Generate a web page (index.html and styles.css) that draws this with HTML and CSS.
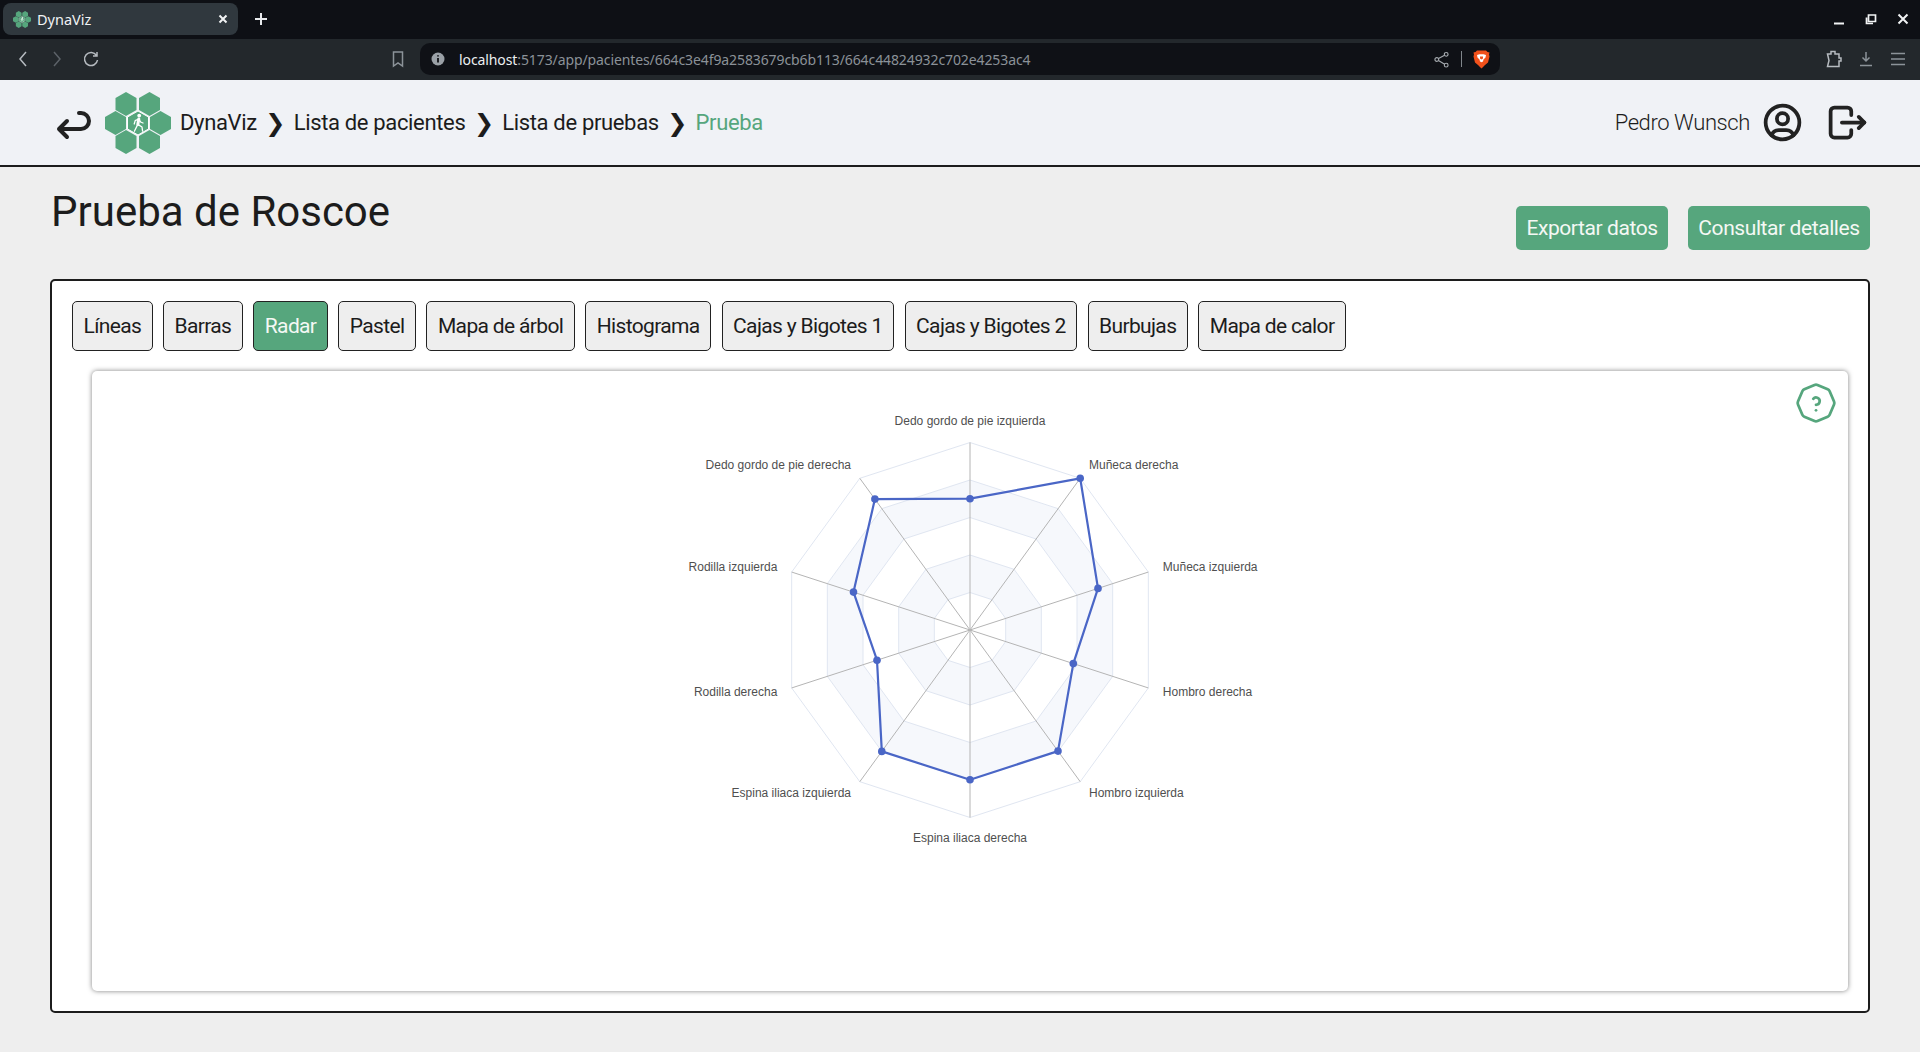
FILE: index.html

```html
<!DOCTYPE html>
<html lang="es">
<head>
  <meta charset="UTF-8">
  <title>DynaViz</title>
  <link rel="stylesheet" href="styles.css">
</head>
<body>
  <svg class="defs" width="0" height="0">
    <defs>
      <polygon id="hex" points="0,-12 10.5,-6 10.5,6 0,12 -10.5,6 -10.5,-6"/>
      <symbol id="logo" viewBox="0 0 66 62">
        <g fill="#56a67d">
          <use href="#hex" x="21" y="12"/>
          <use href="#hex" x="44.5" y="12"/>
          <use href="#hex" x="10.5" y="31"/>
          <use href="#hex" x="55.5" y="31"/>
          <use href="#hex" x="21" y="50"/>
          <use href="#hex" x="44.5" y="50"/>
          <use href="#hex" x="33" y="31" stroke="#fff" stroke-width="1"/>
        </g>
        <g fill="none" stroke="#fff" stroke-linecap="round" stroke-linejoin="round">
          <circle cx="34.2" cy="23.6" r="1.9" fill="#fff" stroke="none"/>
          <path d="M33.8 27l-1 5.4" stroke-width="3"/>
          <path d="M32.8 32.4l-3.4 6.8M32.8 32.4l4.2 2.6l.6 4.2M33.6 27l-3.4 1.6l-1 3.4M34 27l1.6 3l2.4 1" stroke-width="1.3"/>
        </g>
      </symbol>
    </defs>
  </svg>

  <div class="tabstrip">
    <div class="tab">
      <svg class="favicon" width="18" height="17"><use href="#logo"/></svg>
      <span class="tab-title">DynaViz</span>
      <svg class="tab-close" width="10" height="10" viewBox="0 0 10 10"><path d="M1.5 1.5l7 7M8.5 1.5l-7 7"/></svg>
    </div>
    <svg class="tab-new" width="14" height="14" viewBox="0 0 14 14"><path d="M7 1v12M1 7h12"/></svg>
    <div class="win-controls">
      <svg width="12" height="12" viewBox="0 0 12 12"><path d="M1 10.5h10" stroke-width="2"/></svg>
      <svg width="12" height="12" viewBox="0 0 12 12"><path d="M3.500 2h7v6.500h-7zM1.500 4.500v6h6.500" stroke-width="1.700"/></svg>
      <svg width="12" height="12" viewBox="0 0 12 12"><path d="M1.500 1.500l9 9M10.500 1.500l-9 9" stroke-width="2"/></svg>
    </div>
  </div>

  <div class="toolbar">
    <div class="tool-btn"><svg width="20" height="20" viewBox="0 0 20 20"><path d="M13 3l-6 7l6 7"/></svg></div>
    <div class="tool-btn dim"><svg width="20" height="20" viewBox="0 0 20 20"><path d="M7 3l6 7l-6 7"/></svg></div>
    <div class="tool-btn"><svg width="20" height="20" viewBox="0 0 20 20"><path d="M15.500 6.500a6.500 6.500 0 1 0 1 4.500M16 3v4h-4"/></svg></div>
    <div class="tool-btn bookmark"><svg width="20" height="20" viewBox="0 0 20 20"><path d="M5.500 3h9v14l-4.500 -3l-4.500 3z"/></svg></div>
    <div class="urlbar">
      <svg class="url-info" width="14" height="14" viewBox="0 0 14 14"><circle cx="7" cy="7" r="6.500"/><path d="M7 6v4.500M7 3.200v1.400"/></svg>
      <div class="url-text"><span class="url-host">localhost</span>:5173/app/pacientes/664c3e4f9a2583679cb6b113/664c44824932c702e4253ac4</div>
      <svg class="url-share" width="15" height="17" viewBox="0 0 16 18"><circle cx="13" cy="3.500" r="2"/><circle cx="3" cy="9" r="2"/><circle cx="13" cy="15" r="2"/><path d="M4.800 8l6.500 -3.600M4.800 10l6.500 4"/></svg>
      <span class="url-divider"></span>
      <svg class="url-brave" width="17" height="19" viewBox="0 0 17 19">
        <path d="M4 0.500h9l1.500 1.500l2 0.500l-0.500 2l0.500 2l-1.500 6l-3 2.500l-3.500 3.500l-3.500 -3.500l-3 -2.500l-1.500 -6l0.500 -2l-0.500 -2l2 -0.500z" fill="#f1511b"/>
        <path d="M4 5l2.500 -0.800h4l2.500 0.800l-0.500 2.500l-2 2l-0.500 2l-1.500 0.800l-1.500 -0.800l-0.500 -2l-2 -2z" fill="#fff"/>
        <path d="M7 6.500v2l1.500 1l1.500 -1v-2" fill="#f1511b"/>
      </svg>
    </div>
    <div class="tool-right">
      <div class="tool-btn"><svg width="20" height="20" viewBox="0 0 20 20"><path d="M3.500 5h3.500v-2.500h4v2.500h4v4h2v3h-2v5.500h-11.500l1.500 -6z" stroke-width="1.800"/></svg></div>
      <div class="tool-btn dim-more"><svg width="20" height="20" viewBox="0 0 20 20"><path d="M10 3v9M6.500 8.500l3.500 3.500l3.500 -3.500M4 16.500h12"/></svg></div>
      <div class="tool-btn dim-more"><svg width="20" height="20" viewBox="0 0 20 20"><path d="M3 4.500h14M3 10h14M3 15.500h14"/></svg></div>
    </div>
  </div>

  <header class="topbar">
    <svg class="icon back-icon" width="48" height="48" viewBox="0 0 24 24"><path d="M9 11l-4 4l4 4m-4 -4h11a4 4 0 0 0 0 -8h-1"/></svg>
    <svg class="logo" width="66" height="62"><use href="#logo"/></svg>
    <nav class="crumbs">
      <span>DynaViz</span>
      <span class="crumb-sep">❯</span>
      <span>Lista de pacientes</span>
      <span class="crumb-sep">❯</span>
      <span>Lista de pruebas</span>
      <span class="crumb-sep">❯</span>
      <span class="crumb-current">Prueba</span>
    </nav>
    <div class="user">
      <span class="user-name">Pedro Wunsch</span>
      <svg class="icon" width="45" height="45" viewBox="0 0 24 24">
        <path d="M12 12m-9 0a9 9 0 1 0 18 0a9 9 0 1 0 -18 0"/>
        <path d="M12 10m-3 0a3 3 0 1 0 6 0a3 3 0 1 0 -6 0"/>
        <path d="M6.168 18.849a4 4 0 0 1 3.832 -2.849h4a4 4 0 0 1 3.834 2.855"/>
      </svg>
      <svg class="icon logout-icon" width="45" height="45" viewBox="0 0 24 24">
        <path d="M14 8v-2a2 2 0 0 0 -2 -2h-7a2 2 0 0 0 -2 2v12a2 2 0 0 0 2 2h7a2 2 0 0 0 2 -2v-2"/>
        <path d="M9 12h12l-3 -3"/>
        <path d="M18 15l3 -3"/>
      </svg>
    </div>
  </header>

  <main class="content">
    <div class="title-row">
      <h1>Prueba de Roscoe</h1>
      <div class="actions">
        <button class="btn-green btn-export">Exportar datos</button>
        <button class="btn-green btn-details">Consultar detalles</button>
      </div>
    </div>

    <section class="panel">
      <div class="chart-tabs">
        <button class="chart-tab">Líneas</button>
        <button class="chart-tab">Barras</button>
        <button class="chart-tab active">Radar</button>
        <button class="chart-tab">Pastel</button>
        <button class="chart-tab">Mapa de árbol</button>
        <button class="chart-tab">Histograma</button>
        <button class="chart-tab">Cajas y Bigotes 1</button>
        <button class="chart-tab">Cajas y Bigotes 2</button>
        <button class="chart-tab">Burbujas</button>
        <button class="chart-tab">Mapa de calor</button>
      </div>

      <div class="chart-card">
        <svg class="help-icon" width="44" height="44" viewBox="0 0 24 24">
          <path d="M12.802 2.165l5.575 2.389c.48 .206 .863 .589 1.07 1.07l2.388 5.574c.22 .512 .22 1.092 0 1.604l-2.389 5.575c-.206 .48 -.589 .863 -1.07 1.07l-5.574 2.388c-.512 .22 -1.092 .22 -1.604 0l-5.575 -2.389a2.036 2.036 0 0 1 -1.07 -1.07l-2.388 -5.574a2.036 2.036 0 0 1 0 -1.604l2.389 -5.575c.206 -.48 .589 -.863 1.07 -1.07l5.574 -2.388a2.036 2.036 0 0 1 1.604 0z"/>
          <path d="M12 16v.01"/>
          <path d="M12 13a2 2 0 0 0 .914 -3.782a1.98 1.98 0 0 0 -2.414 .483"/>
        </svg>
        <svg class="radar" width="600" height="500" viewBox="-300 -250 600 500">
          <polygon class="ring" points="0,-187.500 110.210,-151.690 178.330,-57.940 178.330,57.940 110.210,151.690 0,187.500 -110.210,151.690 -178.330,57.940 -178.330,-57.940 -110.210,-151.690"/>
          <polygon class="ring shade" points="0,-150 88.170,-121.350 142.660,-46.350 142.660,46.350 88.170,121.350 0,150 -88.170,121.350 -142.660,46.350 -142.660,-46.350 -88.170,-121.350"/>
          <polygon class="ring" points="0,-112.500 66.130,-91.010 107,-34.760 107,34.760 66.130,91.010 0,112.500 -66.130,91.010 -107,34.760 -107,-34.760 -66.130,-91.010"/>
          <polygon class="ring shade" points="0,-75 44.090,-60.680 71.330,-23.180 71.330,23.180 44.090,60.680 0,75 -44.090,60.680 -71.330,23.180 -71.330,-23.180 -44.090,-60.680"/>
          <polygon class="ring" points="0,-37.500 22.040,-30.340 35.670,-11.590 35.670,11.590 22.040,30.340 0,37.500 -22.040,30.340 -35.670,11.590 -35.670,-11.590 -22.040,-30.340"/>
          <path class="spokes" d="M0 -187.500V187.500M110.210 -151.690L-110.210 151.690M178.330 -57.940L-178.330 57.940M178.330 57.940L-178.330 -57.940M110.210 151.690L-110.210 -151.690"/>
          <polygon class="series" points="0,-131.300 110.200,-151.700 128,-41.600 103.300,33.600 88,121.100 0,149.700 -88.200,121.400 -93,30.200 -116.500,-37.900 -95.100,-130.900"/>
          <g class="dots">
            <circle cx="0" cy="-131.300" r="3.800"/>
            <circle cx="110.200" cy="-151.700" r="3.800"/>
            <circle cx="128" cy="-41.600" r="3.800"/>
            <circle cx="103.300" cy="33.600" r="3.800"/>
            <circle cx="88" cy="121.100" r="3.800"/>
            <circle cx="0" cy="149.700" r="3.800"/>
            <circle cx="-88.200" cy="121.400" r="3.800"/>
            <circle cx="-93" cy="30.200" r="3.800"/>
            <circle cx="-116.500" cy="-37.900" r="3.800"/>
            <circle cx="-95.100" cy="-130.900" r="3.800"/>
          </g>
          <g class="labels">
            <text x="0" y="-205" text-anchor="middle">Dedo gordo de pie izquierda</text>
            <text x="119" y="-161">Muñeca derecha</text>
            <text x="192.800" y="-59">Muñeca izquierda</text>
            <text x="192.800" y="66">Hombro derecha</text>
            <text x="119" y="167">Hombro izquierda</text>
            <text x="0" y="212" text-anchor="middle">Espina iliaca derecha</text>
            <text x="-119" y="167" text-anchor="end">Espina iliaca izquierda</text>
            <text x="-192.700" y="66" text-anchor="end">Rodilla derecha</text>
            <text x="-192.700" y="-59" text-anchor="end">Rodilla izquierda</text>
            <text x="-119" y="-161" text-anchor="end">Dedo gordo de pie derecha</text>
          </g>
        </svg>
      </div>
    </section>
  </main>
</body>
</html>
```

FILE: styles.css

```css
* {
  box-sizing: border-box;
}
html, body {
  height: 100%;
}
body {
  margin: 0;
  background: #eeeeee;
  color: #1c1c1c;
  font-family: Roboto, "Liberation Sans", sans-serif;
  overflow: hidden;
}
.defs {
  position: absolute;
}

/* browser frame */
.tabstrip {
  height: 39px;
  background: #0e1015;
  display: flex;
  align-items: flex-start;
  padding: 3px 0 0 3px;
  font-family: "Noto Sans", sans-serif;
}
.tab {
  width: 235px;
  height: 32px;
  background: #30383e;
  border-radius: 8px;
  display: flex;
  align-items: center;
  padding: 0 10px;
  color: #f1f3f4;
  font-size: 14.500px;
}
.favicon {
  margin-right: 6px;
}
.tab-title {
  flex: 1;
}
.tab-close path {
  stroke: #f1f3f4;
  stroke-width: 2;
}
.tab-new {
  margin: 9px 0 0 16px;
}
.tab-new path {
  stroke: #e8eaed;
  stroke-width: 2;
  fill: none;
}
.win-controls {
  margin-left: auto;
  margin-top: 10px;
  display: flex;
  gap: 20px;
  padding-right: 11px;
}
.win-controls path {
  stroke: #f1f3f4;
  fill: none;
}
.toolbar {
  height: 41px;
  background: #23282c;
  display: flex;
  align-items: center;
  padding: 0 12px 1px 13px;
  gap: 14px;
  font-family: "Noto Sans", sans-serif;
}
.tool-btn {
  width: 20px;
  height: 20px;
  flex: none;
}
.tool-btn svg {
  display: block;
}
.tool-btn path {
  fill: none;
  stroke: #b6bbc0;
  stroke-width: 1.5;
}
.tool-btn.dim path {
  stroke: #5c6268;
}
.tool-btn.dim-more path {
  stroke: #8c9399;
}
.bookmark {
  margin-left: 273px;
  margin-right: -2px;
}
.bookmark path {
  stroke: #8c9399;
}
.urlbar {
  width: 1080px;
  height: 32px;
  flex: none;
  background: #0f1116;
  border-radius: 10px;
  display: flex;
  align-items: center;
  padding: 0 10px 0 11px;
  color: #8b9198;
  font-size: 14px;
  letter-spacing: -0.100px;
}
.url-info circle {
  fill: #9aa0a6;
}
.url-info path {
  stroke: #0f1116;
  stroke-width: 1.800;
}
.url-text {
  margin-left: 14px;
  flex: 1;
}
.url-host {
  color: #eceff1;
}
.url-share {
  margin-right: 12px;
}
.url-share circle, .url-share path {
  fill: none;
  stroke: #a6abb0;
  stroke-width: 1.200;
}
.url-divider {
  width: 1px;
  height: 16px;
  background: #80868b;
  margin-right: 11px;
}
.tool-right {
  margin-left: auto;
  display: flex;
  gap: 12px;
}

/* app header */
.topbar {
  height: 87px;
  background: #f0f2f6;
  border-bottom: 2px solid #1c1c1c;
  display: flex;
  align-items: center;
  padding: 0 50px 0 49px;
}
.icon {
  fill: none;
  stroke: #222;
  stroke-width: 2;
  stroke-linecap: round;
  stroke-linejoin: round;
  flex: none;
}
.logo {
  margin-left: 8px;
  flex: none;
}
.crumbs {
  margin-left: 9px;
  display: flex;
  align-items: center;
  gap: 8.500px;
  font-size: 22px;
  letter-spacing: -0.340px;
}
.crumb-sep {
  font-family: "DejaVu Sans", sans-serif;
  font-size: 24px;
  line-height: 24px;
}
.crumb-current {
  color: #56a67d;
}
.user {
  margin-left: auto;
  display: flex;
  align-items: center;
}
.user-name {
  font-size: 22px;
  font-weight: 300;
  letter-spacing: -0.400px;
  margin-right: 10px;
}
.logout-icon {
  margin-left: 20px;
}

/* page content */
.content {
  padding: 0 50px;
}
.title-row {
  height: 112px;
  display: flex;
  justify-content: space-between;
  padding-top: 39px;
}
h1 {
  margin: -24px 0 0 1px;
  font-size: 42px;
  font-weight: 400;
  line-height: 60px;
}
.actions {
  display: flex;
  gap: 20px;
}
button {
  font-family: inherit;
  font-size: 21px;
  cursor: pointer;
}
.btn-green {
  height: 44px;
  background: #56a67d;
  color: #f4f8f4;
  border: none;
  border-radius: 5px;
  padding: 0;
  letter-spacing: -0.420px;
}
.btn-export {
  width: 152px;
}
.btn-details {
  width: 182px;
}
.panel {
  height: 734px;
  background: #fff;
  border: 2px solid #1c1c1c;
  border-radius: 5px;
  padding: 20px 20px 19px;
}
.chart-tabs {
  display: flex;
  gap: 10.500px;
}
.chart-tab {
  height: 50px;
  padding: 0 10.500px;
  background: #eeeeee;
  color: #1c1c1c;
  border: 1px solid #222;
  border-radius: 5px;
  letter-spacing: -0.650px;
}
.chart-tab.active {
  background: #56a67d;
  color: #f4f8f4;
}
.chart-card {
  position: relative;
  height: 620px;
  margin: 20px 0 0 20px;
  padding-top: 9px;
  background: #fff;
  border-radius: 5px;
  box-shadow: 0 0 5px rgba(0, 0, 0, 0.5);
}
.help-icon {
  position: absolute;
  top: 10px;
  right: 10px;
  fill: none;
  stroke: #56a67d;
  stroke-width: 1.500;
  stroke-linecap: round;
  stroke-linejoin: round;
}
.radar {
  display: block;
  margin: 0 auto;
}
.ring {
  fill: #fff;
  stroke: #e0e6f1;
  stroke-width: 1;
}
.ring.shade {
  fill: #f6f8fc;
}
.spokes {
  stroke: #b4b4b4;
  stroke-width: 1;
  fill: none;
}
.series {
  fill: none;
  stroke: #4a66c6;
  stroke-width: 2.200;
  stroke-linejoin: round;
}
.dots circle {
  fill: #4a66c6;
}
.labels text {
  font-family: "Liberation Sans", sans-serif;
  font-size: 12px;
  fill: #4f4f4f;
}
```
